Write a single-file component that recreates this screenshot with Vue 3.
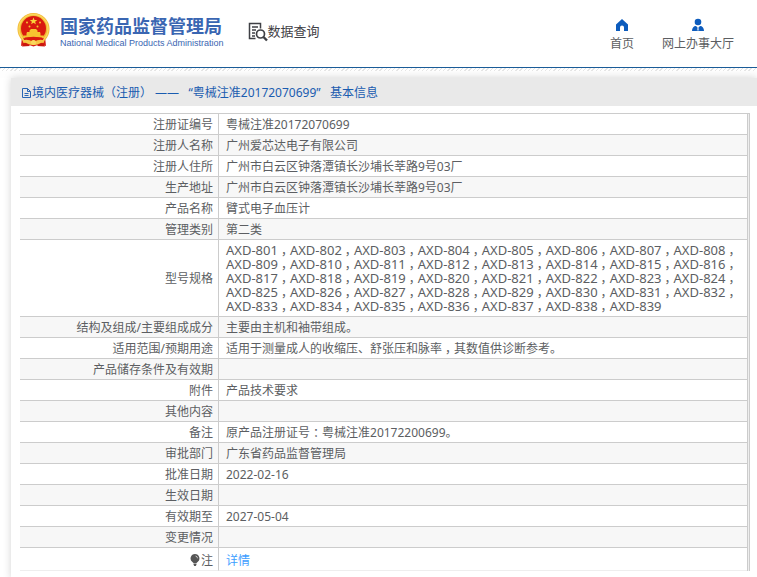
<script setup>
const models = Array.from({ length: 39 }, (_, i) => `AXD-${801 + i}`)

const rows = [
  { label: '注册证编号', value: '粤械注准20172070699' },
  { label: '注册人名称', value: '广州爱芯达电子有限公司' },
  { label: '注册人住所', value: '广州市白云区钟落潭镇长沙埔长莘路9号03厂' },
  { label: '生产地址', value: '广州市白云区钟落潭镇长沙埔长莘路9号03厂' },
  { label: '产品名称', value: '臂式电子血压计' },
  { label: '管理类别', value: '第二类' },
  { label: '型号规格', models },
  { label: '结构及组成/主要组成成分', value: '主要由主机和袖带组成。' },
  { label: '适用范围/预期用途', value: '适用于测量成人的收缩压、舒张压和脉率，其数值供诊断参考。' },
  { label: '产品储存条件及有效期', value: '' },
  { label: '附件', value: '产品技术要求' },
  { label: '其他内容', value: '' },
  { label: '备注', value: '原产品注册证号：粤械注准20172200699。' },
  { label: '审批部门', value: '广东省药品监督管理局' },
  { label: '批准日期', value: '2022-02-16' },
  { label: '生效日期', value: '' },
  { label: '有效期至', value: '2027-05-04' },
  { label: '变更情况', value: '' },
]

// Commas and colons are centred in a full-width cell.
const segments = (text) => text.split(/([，：])/)
</script>

<template>
  <div class="page">
    <header class="header">
      <a class="brand" href="#">
        <svg class="emblem" viewBox="0 0 66 70" aria-hidden="true">
          <path d="M10 48 L8 67 Q20 63 33 68 Q46 63 58 67 L56 48Z" fill="#d81e14" />
          <circle cx="33" cy="33" r="32" fill="#f2b632" />
          <circle cx="33" cy="33" r="29" fill="none" stroke="#f9d75c" stroke-width="3" />
          <circle cx="33" cy="32" r="25" fill="#d9190f" />
          <path d="M33 10l2 5h5.500l-4.300 3.300 1.600 5.200-4.800-3.200-4.800 3.200 1.600-5.200L25.500 15H31z" fill="#f9d33a" />
          <g fill="#f6c330">
            <circle cx="20" cy="20" r="2" /><circle cx="46" cy="20" r="2" />
            <circle cx="25" cy="28" r="2" /><circle cx="41" cy="28" r="2" />
            <path d="M25 36l3-3h10l3 3v3h5l1 3v4h6v4H13v-4h6v-4l1-3h5z" />
          </g>
          <path d="M12 52 Q33 45 54 52 L49 58 Q33 50 17 58Z" fill="#d9190f" />
          <path d="M11 56 Q22 52 28 58 L33 55 38 58 Q44 52 55 56 L53 61 Q43 58 38 64 L33 60 28 64 Q23 58 13 61Z" fill="#f6c544" />
          <circle cx="33" cy="60" r="5" fill="#f9d75c" />
          <path d="M12 63 Q20 59 26 67 L10 68Z M54 63 Q46 59 40 67 L56 68Z" fill="#c9160e" />
        </svg>
        <span class="brand-text">
          <span class="brand-cn">国家药品监督管理局</span>
          <span class="brand-en">National Medical Products Administration</span>
        </span>
      </a>

      <div class="section">
        <svg class="search-doc" viewBox="0 0 20 20" fill="none" stroke="#3f4045" aria-hidden="true">
          <path d="M7.500 16.500H1.500V1.500h11v5" stroke-width="1.500" />
          <path d="M4 5h6M4 8h4M4 11h3M4 14h3" stroke-width="1.300" />
          <circle cx="12.500" cy="12" r="4" stroke-width="1.700" />
          <path d="M15.500 15l3.500 3.500" stroke-width="2.400" />
        </svg>
        <span>数据查询</span>
      </div>

      <nav class="nav">
        <a href="#">
          <svg viewBox="0 0 14 14" aria-hidden="true">
            <path d="M7 1L1 6.500V13h4V9.500a2 2 0 0 1 4 0V13h4V6.500z" fill="#0d5cbd" />
          </svg>
          <span>首页</span>
        </a>
        <a href="#">
          <svg viewBox="0 0 14 14" aria-hidden="true">
            <circle cx="7" cy="4" r="3.300" fill="#0d5cbd" />
            <path d="M1 13c0-3 1.500-5 4-5l2 2 2-2c2.500 0 4 2 4 5z" fill="#0d5cbd" />
            <path d="M6.300 9.500h1.400l.5 3H5.800z" fill="#fff" opacity=".6" />
          </svg>
          <span>网上办事大厅</span>
        </a>
      </nav>
    </header>
    <div class="hatch"></div>

    <main class="panel">
      <h1 class="title">
        <svg viewBox="0 0 11 12" fill="none" stroke="#2a66b4" aria-hidden="true">
          <path d="M1.500 1.500h5l3 3v6h-8zM6.500 1.500v3h3M3.500 6.500h4M3.500 8.500h4" />
        </svg>
        <span>境内医疗器械（注册） ——&nbsp;&nbsp; “粤械注准20172070699”&nbsp;&nbsp; 基本信息</span>
      </h1>

      <div class="frame">
        <table class="info">
          <tbody>
            <tr v-for="row in rows" :key="row.label">
              <th scope="row">{{ row.label }}</th>
              <td v-if="row.models" class="models">
                <template v-for="(model, i) in row.models" :key="model"><span class="model">{{ model }}<span v-if="i < row.models.length - 1" class="mark">，</span></span><wbr></template>
              </td>
              <td v-else>
                <span v-for="(part, i) in segments(row.value)" :key="i" :class="{ mark: i % 2 }">{{ part }}</span>
              </td>
            </tr>
            <tr class="note">
              <th scope="row">
                <svg viewBox="0 0 10 12" aria-hidden="true">
                  <path d="M5 0a4.500 4.500 0 0 0-2.600 8.100L3.500 9h3l1.100-.9A4.500 4.500 0 0 0 5 0zM3.500 9.500h3v1L5.800 12H4.200l-.7-1.500z" fill="#555" />
                  <path d="M5.500 2q2 .3 2 2.300" fill="none" stroke="#ddd" stroke-width=".8" />
                </svg>注
              </th>
              <td><a href="#">详情</a></td>
            </tr>
          </tbody>
        </table>
      </div>
    </main>
  </div>
</template>

<style>
body {
  margin: 0;
  background: #fff;
}
</style>

<style scoped>
.page {
  overflow: hidden;
  font-family: "Noto Sans", "Noto Sans CJK SC", sans-serif;
  font-size: 12px;
  line-height: 14px;
  color: #5c5e62;
}

a {
  color: inherit;
  text-decoration: none;
}

svg {
  display: block;
  flex: none;
}

.header {
  display: flex;
  align-items: flex-start;
  height: 67px;
  padding: 0 23px 0 17px;
  box-sizing: border-box;
}

.brand {
  display: flex;
  gap: 10px;
  padding-top: 12px;
  color: #3a66b2;
}

.emblem {
  width: 33px;
  height: 36px;
}

.brand-text {
  display: flex;
  flex-direction: column;
  padding-top: 4px;
  white-space: nowrap;
}

.brand-cn {
  font-size: 18px;
  line-height: 20px;
  font-weight: 700;
}

.brand-en {
  font-family: "Liberation Sans", sans-serif;
  font-size: 9px;
  line-height: 14px;
}

.section {
  display: flex;
  padding-top: 21px;
  margin-left: 24px;
  font-size: 13px;
  line-height: 20px;
  color: #3f4045;
  white-space: nowrap;
}

.search-doc {
  width: 20px;
  height: 22px;
}

.nav {
  display: flex;
  gap: 28px;
  margin-left: auto;
  padding-top: 18px;
  white-space: nowrap;
}

.nav a {
  display: flex;
  flex-direction: column;
  align-items: center;
  gap: 5px;
}

.nav svg {
  width: 14px;
  height: 14px;
}

.hatch {
  height: 10px;
  border-top: 1px solid #1a5c98;
  background: repeating-linear-gradient(135deg, #e6e6e6 0 1px, #fff 1px 3px) top / 100% 3px no-repeat, #fefefe;
}

.panel {
  margin-left: 11px;
  padding-bottom: 8px;
  background: #fff;
  box-shadow: 0 0 8px #d4d4d4;
}

.title {
  display: flex;
  align-items: center;
  height: 28px;
  margin: 0 0 7px;
  padding: 2px 0 0 10px;
  box-sizing: border-box;
  background: #e9e9e9;
  font-size: 12px;
  font-weight: 400;
  color: #1a5cb0;
  white-space: nowrap;
}

.title svg {
  width: 11px;
  height: 12px;
}

.frame {
  margin: 0 7px 0 9px;
  padding-right: 1px;
  border-top: 1px solid #ccc;
  border-right: 1px solid #ccc;
  background: #eee;
}

.info {
  width: 100%;
  border-collapse: separate;
  border-spacing: 0;
  border-right: 1px solid #ccc;
  background: #fff;
}

.info th,
.info td {
  padding: 4px 5px 2px 7px;
  border-bottom: 1px solid #ccc;
  height: 14px;
  font-weight: 400;
  line-height: 14px;
}

.info th {
  width: 186px;
  text-align: right;
  white-space: nowrap;
}

.info td {
  border-left: 1px solid #ccc;
  text-align: left;
}

.info tr:nth-child(even) {
  background: #f7f7f7;
}

.info .note {
  background: #fff;
}

.info .note th,
.info .note td {
  padding-top: 6px;
  border-bottom-color: #eee;
}

.note svg {
  display: inline-block;
  width: 10px;
  height: 12px;
  margin-right: 1px;
  vertical-align: -1px;
}

.note a {
  color: #409eff;
}

.info .models {
  padding-top: 3px;
  padding-bottom: 3px;
  font-size: 13px;
}

.model {
  white-space: nowrap;
}

.mark {
  padding: 0 3px;
  font-size: 12px;
  line-height: 0;
  font-feature-settings: "halt";
}
</style>
